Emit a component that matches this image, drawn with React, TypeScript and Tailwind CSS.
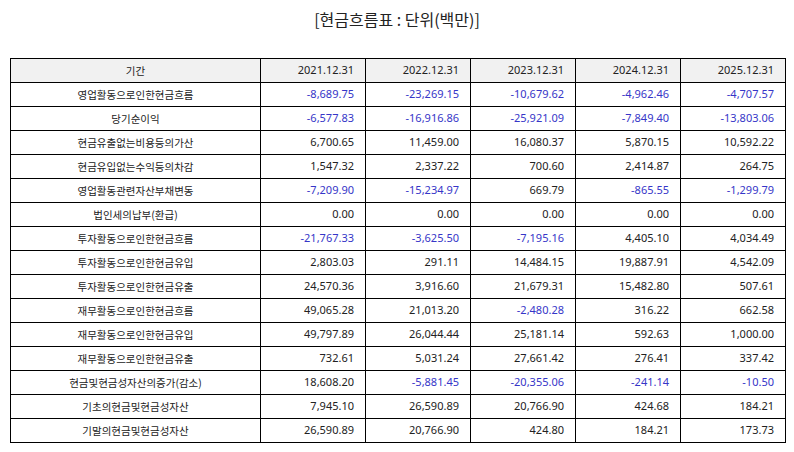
const YEARS = ["2021.12.31", "2022.12.31", "2023.12.31", "2024.12.31", "2025.12.31"];

const ROWS: [string, string[]][] = [
  ["영업활동으로인한현금흐름", ["-8,689.75", "-23,269.15", "-10,679.62", "-4,962.46", "-4,707.57"]],
  ["당기순이익", ["-6,577.83", "-16,916.86", "-25,921.09", "-7,849.40", "-13,803.06"]],
  ["현금유출없는비용등의가산", ["6,700.65", "11,459.00", "16,080.37", "5,870.15", "10,592.22"]],
  ["현금유입없는수익등의차감", ["1,547.32", "2,337.22", "700.60", "2,414.87", "264.75"]],
  ["영업활동관련자산부채변동", ["-7,209.90", "-15,234.97", "669.79", "-865.55", "-1,299.79"]],
  ["법인세의납부(환급)", ["0.00", "0.00", "0.00", "0.00", "0.00"]],
  ["투자활동으로인한현금흐름", ["-21,767.33", "-3,625.50", "-7,195.16", "4,405.10", "4,034.49"]],
  ["투자활동으로인한현금유입", ["2,803.03", "291.11", "14,484.15", "19,887.91", "4,542.09"]],
  ["투자활동으로인한현금유출", ["24,570.36", "3,916.60", "21,679.31", "15,482.80", "507.61"]],
  ["재무활동으로인한현금흐름", ["49,065.28", "21,013.20", "-2,480.28", "316.22", "662.58"]],
  ["재무활동으로인한현금유입", ["49,797.89", "26,044.44", "25,181.14", "592.63", "1,000.00"]],
  ["재무활동으로인한현금유출", ["732.61", "5,031.24", "27,661.42", "276.41", "337.42"]],
  ["현금및현금성자산의증가(감소)", ["18,608.20", "-5,881.45", "-20,355.06", "-241.14", "-10.50"]],
  ["기초의현금및현금성자산", ["7,945.10", "26,590.89", "20,766.90", "424.68", "184.21"]],
  ["기말의현금및현금성자산", ["26,590.89", "20,766.90", "424.80", "184.21", "173.73"]],
];

export default function App() {
  return (
    <div
      className="w-[794px] h-[452px] bg-white px-[10px] text-[#222]"
      style={{ fontFamily: '"Noto Sans", "Noto Sans CJK KR", sans-serif' }}
    >
      <h1 className="h-[58px] pt-[7px] text-center text-[16px] leading-[24px] font-normal" style={{ fontFamily: '"Noto Sans CJK KR", sans-serif' }}>
        [현금흐름표 : 단위(백만)]
      </h1>
      <table className="w-[775px] table-fixed border-collapse">
        <colgroup>
          <col className="w-[250px]" />
          {YEARS.map((y) => (
            <col key={y} className="w-[105px]" />
          ))}
        </colgroup>
        <thead>
          <tr className="h-[24px] bg-[#f1f1f1]">
            <th className="border border-black p-0 text-center text-[10.5px] font-normal" style={{ fontFamily: '"Noto Sans CJK KR", sans-serif' }}>
              기간
            </th>
            {YEARS.map((y) => (
              <th key={y} className="border border-black p-0 pr-[11px] text-right text-[11px] font-normal">
                {y}
              </th>
            ))}
          </tr>
        </thead>
        <tbody>
          {ROWS.map(([label, values]) => (
            <tr key={label} className="h-[24px]">
              <td className="border border-black p-0 text-center text-[10.5px]" style={{ fontFamily: '"Noto Sans CJK KR", sans-serif' }}>
                {label}
              </td>
              {values.map((v, i) => (
                <td
                  key={i}
                  className={`border border-black p-0 pr-[11px] text-right text-[11px] ${v.startsWith("-") ? "text-[#3636c8]" : "text-[#222]"}`}
                >
                  {v}
                </td>
              ))}
            </tr>
          ))}
        </tbody>
      </table>
    </div>
  );
}
